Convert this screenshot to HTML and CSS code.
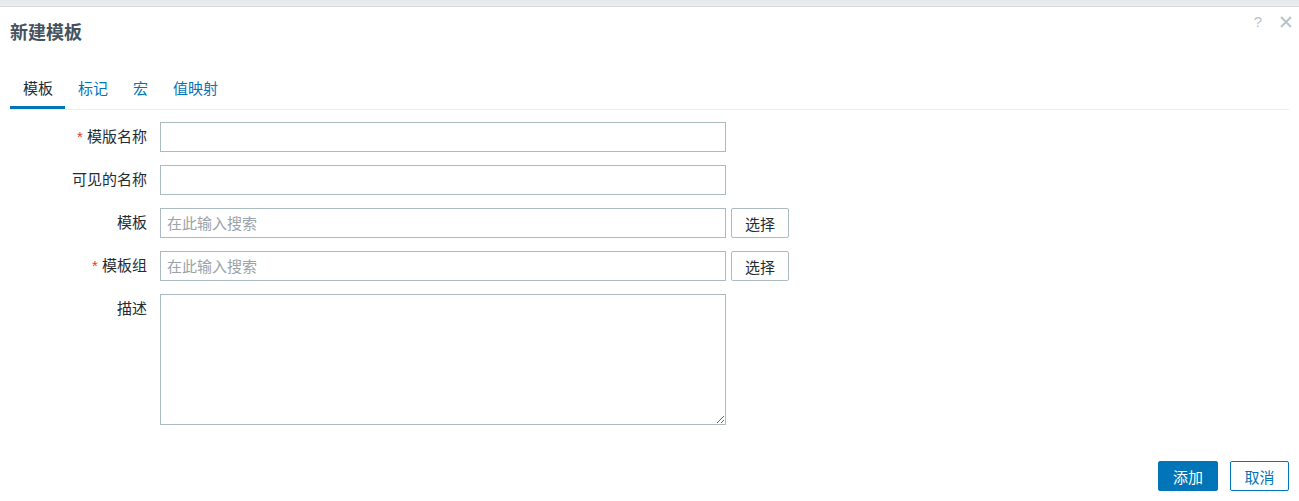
FILE: index.html
```html
<!DOCTYPE html>
<html lang="zh">
<head>
<meta charset="utf-8">
<title>新建模板</title>
<link rel="stylesheet" href="styles.css">
</head>
<body>
<div class="topbar"></div>
<div class="dialog">
  <div class="header">
    <h4 class="title">新建模板</h4>
    <div class="header-actions">
      <span class="help">?</span>
      <svg class="close" width="12" height="12" viewBox="0 0 12 12"><path d="M1 1 L11 11 M11 1 L1 11" stroke="#b8c4ca" stroke-width="2" fill="none"/></svg>
    </div>
  </div>
  <ul class="tabs">
    <li class="tab active">模板</li>
    <li class="tab">标记</li>
    <li class="tab">宏</li>
    <li class="tab">值映射</li>
  </ul>
  <form class="form">
    <label class="label"><span class="req">*</span> 模版名称</label>
    <div class="field"><input class="input" type="text"></div>

    <label class="label">可见的名称</label>
    <div class="field"><input class="input" type="text"></div>

    <label class="label">模板</label>
    <div class="field"><input class="input" type="text" placeholder="在此输入搜索"><button type="button" class="btn-select">选择</button></div>

    <label class="label"><span class="req">*</span> 模板组</label>
    <div class="field"><input class="input" type="text" placeholder="在此输入搜索"><button type="button" class="btn-select">选择</button></div>

    <label class="label">描述</label>
    <div class="field"><textarea class="textarea"></textarea></div>
  </form>
  <div class="footer">
    <button type="button" class="btn-primary">添加</button>
    <button type="button" class="btn-secondary">取消</button>
  </div>
</div>
</body>
</html>
```
FILE: styles.css
```css
* { box-sizing: border-box; }
html, body { margin: 0; padding: 0; background: #ffffff; }
body {
  font-family: "Liberation Sans", "Noto Sans CJK SC", sans-serif;
  font-size: 15px;
  color: #1f2c33;
}
.topbar {
  height: 7px;
  background: linear-gradient(#e6e9eb, #eceff1);
  border-bottom: 1px solid #d6dadd;
}
.dialog {
  padding: 0 10px;
  position: relative;
}
.header {
  height: 52px;
  display: flex;
  align-items: center;
}
.title {
  margin: 0;
  font-size: 18px;
  font-weight: bold;
  color: #46525d;
  line-height: 24px;
}
.header-actions {
  position: absolute;
  right: 7px;
  top: 6px;
  display: flex;
  align-items: center;
  gap: 18px;
}
.help {
  font-size: 15px;
  color: #b8c4ca;
  line-height: 18px;
}
.close { display: block; }
.tabs {
  list-style: none;
  margin: 10px 0 0 0;
  padding: 0;
  display: flex;
  border-bottom: 1px solid #ebeef0;
}
.tab {
  padding: 10px 12px 7px 13px;
  line-height: 20px;
  color: #0275b8;
  border-bottom: 3px solid transparent;
}
.tab.active {
  color: #1f2c33;
  border-bottom-color: #0275b8;
}
.form {
  display: grid;
  grid-template-columns: 137px 1fr;
  column-gap: 13px;
  row-gap: 13px;
  padding-top: 12px;
}
.label {
  text-align: right;
  line-height: 30px;
  white-space: nowrap;
}
.req { color: #e33734; }
.field {
  display: flex;
  gap: 5px;
  align-items: flex-start;
}
.input {
  width: 566px;
  height: 30px;
  border: 1px solid #acbbc2;
  padding: 0 6px;
  font: inherit;
  font-size: 15px;
  color: #1f2c33;
  background: #fff;
  outline: none;
}
.input::placeholder { color: #9aa3a9; }
.btn-select {
  width: 58px;
  height: 30px;
  border: 1px solid #acbbc2;
  border-radius: 2px;
  background: #fff;
  font: inherit;
  font-size: 15px;
  color: #1f2c33;
  padding: 0;
}
.textarea {
  width: 566px;
  height: 131px;
  border: 1px solid #acbbc2;
  font: inherit;
  padding: 4px 6px;
  resize: both;
  outline: none;
}
.footer {
  display: flex;
  justify-content: flex-end;
  gap: 12px;
  margin-top: 36px;
}
.btn-primary, .btn-secondary {
  height: 30px;
  border-radius: 2px;
  font: inherit;
  font-size: 15px;
  padding: 0;
}
.btn-primary {
  width: 60px;
  background: #0275b8;
  color: #fff;
  border: 1px solid #0275b8;
}
.btn-secondary {
  width: 59px;
  background: #fff;
  color: #0275b8;
  border: 1px solid #0275b8;
}
```
